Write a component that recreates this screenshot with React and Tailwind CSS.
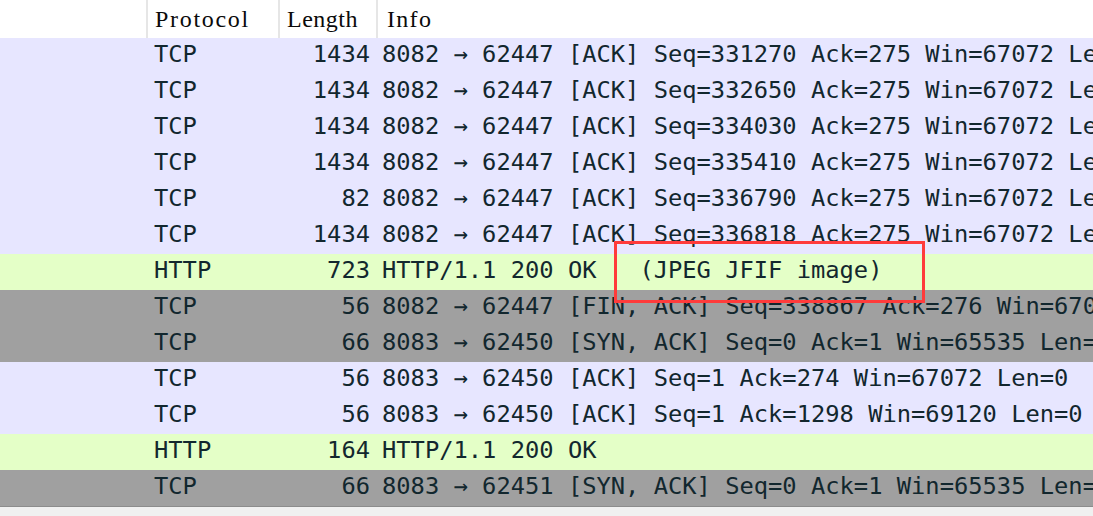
import React from "react";

const LAV = "bg-[#e7e6ff]";
const GRN = "bg-[#e4ffc7]";
const GRY = "bg-[#a0a0a0]";

const rows = [
  [LAV, "TCP", "1434", "8082 → 62447 [ACK] Seq=331270 Ack=275 Win=67072 Len=1380"],
  [LAV, "TCP", "1434", "8082 → 62447 [ACK] Seq=332650 Ack=275 Win=67072 Len=1380"],
  [LAV, "TCP", "1434", "8082 → 62447 [ACK] Seq=334030 Ack=275 Win=67072 Len=1380"],
  [LAV, "TCP", "1434", "8082 → 62447 [ACK] Seq=335410 Ack=275 Win=67072 Len=1380"],
  [LAV, "TCP", "82", "8082 → 62447 [ACK] Seq=336790 Ack=275 Win=67072 Len=28"],
  [LAV, "TCP", "1434", "8082 → 62447 [ACK] Seq=336818 Ack=275 Win=67072 Len=1380"],
  [GRN, "HTTP", "723", "HTTP/1.1 200 OK   (JPEG JFIF image)"],
  [GRY, "TCP", "56", "8082 → 62447 [FIN, ACK] Seq=338867 Ack=276 Win=67072 Len=0"],
  [GRY, "TCP", "66", "8083 → 62450 [SYN, ACK] Seq=0 Ack=1 Win=65535 Len=0 MSS=1460"],
  [LAV, "TCP", "56", "8083 → 62450 [ACK] Seq=1 Ack=274 Win=67072 Len=0"],
  [LAV, "TCP", "56", "8083 → 62450 [ACK] Seq=1 Ack=1298 Win=69120 Len=0"],
  [GRN, "HTTP", "164", "HTTP/1.1 200 OK"],
  [GRY, "TCP", "66", "8083 → 62451 [SYN, ACK] Seq=0 Ack=1 Win=65535 Len=0 MSS=1460"],
];

const mono = { fontFamily: '"DejaVu Sans Mono", "Liberation Mono", monospace' };
const serif = { fontFamily: '"Liberation Serif", "DejaVu Serif", serif' };

export default function App() {
  return (
    <div className="relative w-[1093px] h-[516px] overflow-hidden bg-white">
      {/* header */}
      <div className="flex h-[38px] bg-white text-[24px] text-[#0a0a0a] leading-[38px]" style={serif}>
        <div className="w-[146px] shrink-0" />
        <div className="w-[132px] shrink-0 border-l-2 border-[#e6e6e6] pl-[7px] tracking-[1.7px]">Protocol</div>
        <div className="w-[98px] shrink-0 border-l-2 border-[#e6e6e6] pl-[7px] tracking-[0.5px]">Length</div>
        <div className="flex-1 border-l-2 border-[#e6e6e6] pl-[9px] tracking-[1.3px]">Info</div>
      </div>
      {/* rows */}
      <div className="text-[23.75px] text-[#12272e]" style={mono}>
        {rows.map(([bg, proto, len, info], i) => (
          <div key={i} className={`flex h-[36px] leading-[33px] whitespace-nowrap ${bg}`}>
            <div className="w-[146px] shrink-0" />
            <div className="w-[132px] shrink-0 pl-[8px]">{proto}</div>
            <div className="w-[98px] shrink-0 pr-[6px] text-right">{len}</div>
            <div className="flex-1 overflow-hidden pl-[6px] whitespace-pre">{info}</div>
          </div>
        ))}
      </div>
      <div className="h-[10px] border-t border-[#8c8c8c] bg-[#f0f0f0]" />
      {/* red highlight box */}
      <div className="absolute left-[614px] top-[241px] w-[311px] h-[62px] border-[3px] border-[#ff3b3b]" />
    </div>
  );
}
